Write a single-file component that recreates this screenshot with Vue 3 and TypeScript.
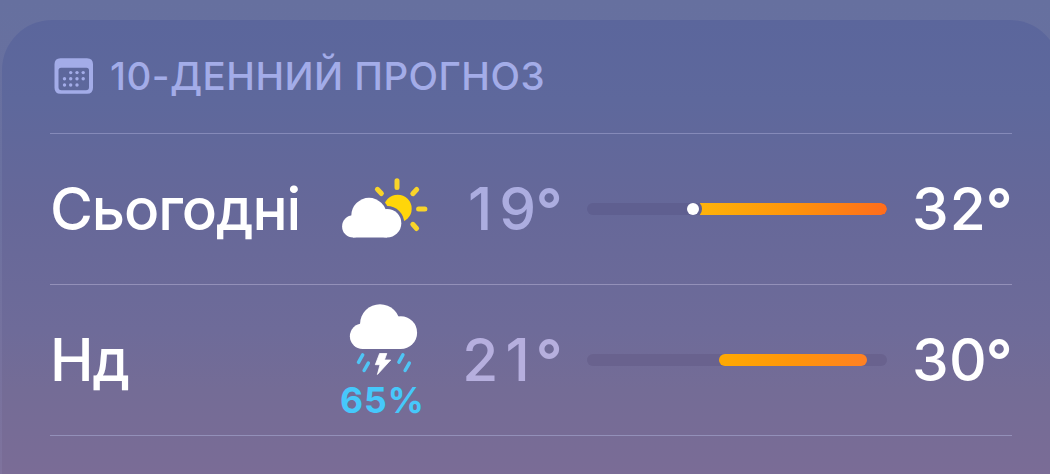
<script setup lang="ts">
type Sky = 'partly-sunny' | 'thunderstorm'

interface Day {
  name: string
  sky: Sky
  chance?: string
  low: number
  high: number
  // Bar geometry as a share of the track
  from: number
  to: number
  now?: number
  warm: string
  hot: string
}

const days: Day[] = [
  { name: 'Сьогодні', sky: 'partly-sunny', low: 19, high: 32, from: 35.4, to: 100, now: 35.4, warm: '#fdb50b', hot: '#ff6c1d' },
  { name: 'Нд', sky: 'thunderstorm', chance: '65%', low: 21, high: 30, from: 44, to: 93.3, warm: '#ffaa02', hot: '#ff8023' },
]

const digits = (n: number) => String(n).split('')

const fillStyle = (d: Day) => ({
  left: `${d.from}%`,
  width: `${d.to - d.from}%`,
  backgroundImage: `linear-gradient(100deg, ${d.warm}, #ff950a 50%, ${d.hot})`,
})
</script>

<template>
  <main class="screen">
    <section class="card">
      <header class="head">
        <svg class="calendar" width="40" height="36" viewBox="0 0 40 36">
          <path
            fill="currentColor"
            fill-rule="evenodd"
            d="M6.500 .2H33Q39 .2 39 6.200V29.700Q39 35.700 33 35.700H6.500Q.5 35.700 .5 29.700V6.200Q.5 .2 6.500 .2ZM7 9.700Q4.500 9.700 4.500 12.200V29.200Q4.500 32.200 7.500 32.200H32Q35 32.200 35 29.200V12.200Q35 9.700 32.500 9.700Z"
          />
          <g fill="currentColor">
            <circle cx="16.700" cy="14.600" r="1.700" />
            <circle cx="23" cy="14.600" r="1.700" />
            <circle cx="29.200" cy="14.600" r="1.700" />
            <circle cx="10.500" cy="20.800" r="1.700" />
            <circle cx="16.700" cy="20.800" r="1.700" />
            <circle cx="23" cy="20.800" r="1.700" />
            <circle cx="29.200" cy="20.800" r="1.700" />
            <circle cx="10.500" cy="27" r="1.700" />
            <circle cx="16.700" cy="27" r="1.700" />
            <circle cx="23" cy="27" r="1.700" />
          </g>
        </svg>
        <h1 class="title">10-ДЕННИЙ ПРОГНОЗ</h1>
      </header>

      <article v-for="d in days" :key="d.name" class="day" :class="d.sky">
        <span class="name">{{ d.name }}</span>

        <span class="sky">
          <svg v-if="d.sky === 'partly-sunny'" width="100" height="76" viewBox="334 171 100 76">
            <defs>
              <mask id="behind-cloud" maskUnits="userSpaceOnUse" x="334" y="171" width="100" height="76">
                <rect x="334" y="171" width="100" height="76" fill="#fff" />
                <g fill="#000">
                  <circle cx="369" cy="215.500" r="20.600" />
                  <circle cx="387" cy="223.200" r="17.200" />
                </g>
              </mask>
            </defs>
            <circle cx="397.700" cy="208.700" r="14" fill="#ffd60a" mask="url(#behind-cloud)" />
            <g stroke="#f8d42a" stroke-width="5" stroke-linecap="round">
              <path d="M397 180.800V187.500M418.600 209H424.900M412.800 193.700L416.700 189.500M412.800 224.300L416.600 228.500M377.400 189.300L381.400 193.500" />
            </g>
            <g fill="#fff">
              <circle cx="369" cy="215.500" r="17.700" />
              <circle cx="387" cy="223.200" r="14.300" />
              <circle cx="353.200" cy="226.400" r="11.100" />
              <path d="M353 217H387V237.500H353Z" />
            </g>
          </svg>

          <svg v-else width="100" height="76" viewBox="334 303 100 76">
            <g fill="#fff">
              <circle cx="380" cy="323.200" r="20" />
              <circle cx="400.700" cy="331.700" r="16.400" />
              <circle cx="362.600" cy="335.300" r="12.700" />
              <path d="M362 325H401V348.050H362Z" />
              <path
                d="M379.600 352.500H386.800L384.400 359H390.700L377.400 373.500L380 363.700H375.300Z"
                stroke="#fff"
                stroke-width=".8"
                stroke-linejoin="round"
              />
            </g>
            <path
              d="M362.700 353.900L358.500 361.300M368.300 362.100L364.100 369.500M402.900 353.900L398.900 361.100M409.300 362.100L405.100 369.500"
              stroke="#4fc5f5"
              stroke-width="3.500"
              stroke-linecap="round"
            />
          </svg>
          <span v-if="d.chance" class="chance">{{ d.chance }}</span>
        </span>

        <span class="temp low"><span v-for="(n, i) in digits(d.low)" :key="i" class="digit">{{ n }}</span><span class="degree">°</span></span>

        <span class="track">
          <span class="fill" :class="{ flat: d.now !== undefined }" :style="fillStyle(d)"></span>
          <span v-if="d.now !== undefined" class="now" :style="{ left: `${d.now}%` }"></span>
        </span>

        <span class="temp"><span v-for="(n, i) in digits(d.high)" :key="i" class="digit">{{ n }}</span><span class="degree">°</span></span>
      </article>
    </section>
  </main>
</template>

<style>
body {
  margin: 0;
}
</style>

<style scoped>
.screen {
  box-sizing: border-box;
  height: 474px;
  padding: 20px 0 0 2px;
  overflow: hidden;
  background: linear-gradient(#66709f, #6b71a0 40%, #7f739d);
  font-family: Inter, "Noto Sans", sans-serif;
}

.card {
  box-sizing: border-box;
  width: 1058px;
  height: 520px;
  padding: 0 48px;
  border-radius: 50px;
  background: linear-gradient(#5b669c 0, #5e689c 80px, #666899 190px, #6e6b99 310px, #746c96 370px, #7a6c96 454px);
}

.head {
  box-sizing: border-box;
  display: flex;
  align-items: center;
  width: 962px;
  height: 114px;
  padding: 0 0 1px 3.500px;
  border-bottom: 1px solid #858ab9;
  color: #a3ace8;
}

.calendar {
  flex: none;
  margin-right: 16.5px;
}

.title {
  margin: 0;
  font-size: 38.5px;
  font-weight: 500;
  line-height: 46px;
  letter-spacing: 0.45px;
  white-space: nowrap;
}

.day {
  box-sizing: border-box;
  display: grid;
  grid-template-columns: 284px 100px 128px 325px 125px;
  align-items: center;
  width: 962px;
  height: 151px;
  border-bottom: 1px solid #9390b9;
  color: #fff;
  font-size: 58.5px;
  font-weight: 500;
  line-height: 70px;
  white-space: nowrap;
}

.name {
  letter-spacing: -1.1px;
}

.temp {
  display: flex;
  justify-content: flex-end;
  height: 70px;
}

.digit {
  display: flex;
  justify-content: center;
  width: 37.5px;
}

.degree {
  display: flex;
  justify-content: center;
  width: 25.5px;
  padding-top: 1px;
  font-weight: 600;
}

.low {
  color: #acade0;
}

.thunderstorm .low {
  color: #b6afde;
}

.track {
  position: relative;
  width: 300px;
  height: 12px;
  margin-left: 25px;
  overflow: hidden;
  border-radius: 6px;
  background: var(--track);
}

.partly-sunny {
  --track: #5f5f90;
}

.thunderstorm {
  --track: #69628e;
}

.fill {
  position: absolute;
  top: 0;
  bottom: 0;
  border-radius: 6px;
}

.fill.flat {
  border-radius: 0 6px 6px 0;
}

.now {
  position: absolute;
  top: 0;
  width: 12px;
  height: 12px;
  margin-left: -6px;
  border-radius: 50%;
  background: #fff;
  box-shadow: 0 0 0 3px var(--track);
}

.sky {
  display: flex;
  flex-direction: column;
  align-items: center;
  gap: 3px;
}

.sky svg {
  display: block;
}

.chance {
  margin-right: 3px;
  margin-bottom: -1px;
  color: #46c8fb;
  font-size: 35.600px;
  font-weight: 650;
  line-height: 35px;
  letter-spacing: 1px;
}
</style>
